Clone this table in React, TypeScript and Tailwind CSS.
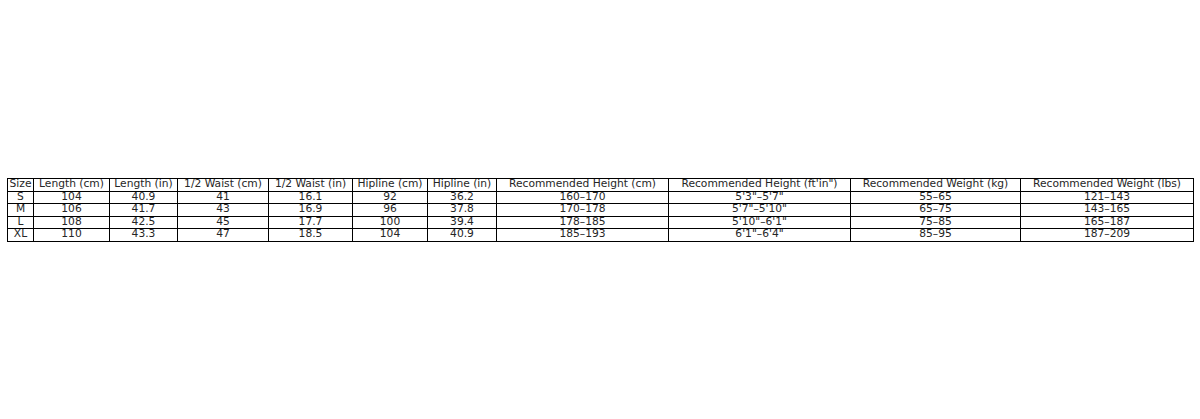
import React from "react";

const headers = [
  "Size",
  "Length (cm)",
  "Length (in)",
  "1/2 Waist (cm)",
  "1/2 Waist (in)",
  "Hipline (cm)",
  "Hipline (in)",
  "Recommended Height (cm)",
  "Recommended Height (ft'in\")",
  "Recommended Weight (kg)",
  "Recommended Weight (lbs)",
];

const rows = [
  ["S", "104", "40.9", "41", "16.1", "92", "36.2", "160–170", "5'3\"–5'7\"", "55–65", "121–143"],
  ["M", "106", "41.7", "43", "16.9", "96", "37.8", "170–178", "5'7\"–5'10\"", "65–75", "143–165"],
  ["L", "108", "42.5", "45", "17.7", "100", "39.4", "178–185", "5'10\"–6'1\"", "75–85", "165–187"],
  ["XL", "110", "43.3", "47", "18.5", "104", "40.9", "185–193", "6'1\"–6'4\"", "85–95", "187–209"],
];

const widths = [26, 76, 68, 91, 84, 75, 69, 172, 182, 170, 173];

export default function App() {
  return (
    <div className="w-[1200px] h-[419px] bg-white overflow-hidden">
      <div className="pt-[178px] pl-[7px]">
        <table
          className="table-fixed border-collapse w-[1186px] text-[10.7px] leading-none text-[#262626]"
          style={{ fontFamily: '"DejaVu Sans", sans-serif' }}
        >
          <colgroup>
            {widths.map((w, i) => (
              <col key={i} style={{ width: w }} />
            ))}
          </colgroup>
          <tbody>
            <tr className="h-[12.5px]">
              {headers.map((h, i) => (
                <td key={i} className="border border-black p-0 text-center whitespace-nowrap overflow-hidden">
                  {h}
                </td>
              ))}
            </tr>
            {rows.map((r, ri) => (
              <tr key={ri} className="h-[12.5px]">
                {r.map((c, ci) => (
                  <td key={ci} className="border border-black p-0 text-center whitespace-nowrap overflow-hidden">
                    {c}
                  </td>
                ))}
              </tr>
            ))}
          </tbody>
        </table>
      </div>
    </div>
  );
}
